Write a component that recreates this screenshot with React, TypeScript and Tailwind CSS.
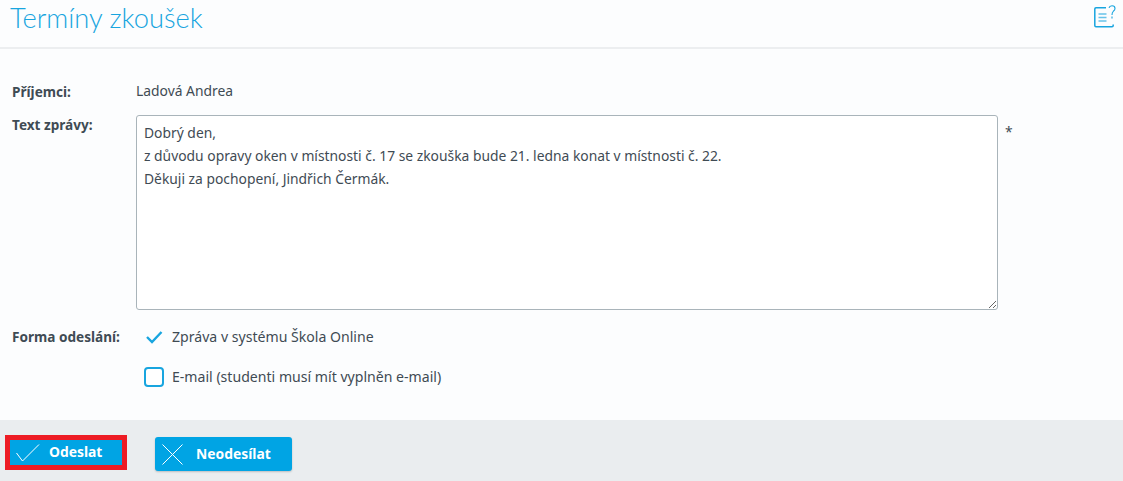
import { useState } from "react";

const CheckIcon = () => (
    <svg width="24" height="18" viewBox="0 0 24 18" fill="none" stroke="#fff" strokeWidth="1">
        <path d="M0.5 9 L6.5 17 L23 0.5" />
    </svg>
);

const CrossIcon = () => (
    <svg width="21" height="21" viewBox="0 0 21 21" fill="none" stroke="#fff" strokeWidth="1">
        <path d="M0.5 0.5 L20.5 20.5 M20.5 0.5 L0.5 20.5" />
    </svg>
);

const HelpIcon = () => (
    <svg width="22" height="23" viewBox="0 0 22 23" fill="none" stroke="#18a5df">
        <path d="M12 2.8 H2 Q0.8 2.8 0.8 4 V20.5 Q0.8 21.7 2 21.7 H18 Q19.2 21.7 19.2 20.5 V19.5" strokeWidth="1.5" />
        <path d="M4.5 9 H12.5 M4.5 12.5 H12.5 M4.5 16 H12.5" strokeWidth="1.5" opacity="0.65" />
        <path d="M15 2.8 Q15.5 0.7 18 0.7 Q21 0.7 21 3.4 Q21 5 19.3 6.3 Q18 7.4 18 10 M18 11.5 V13.5" strokeWidth="1.1" />
    </svg>
);

const App = () => {
    const [inSystem, setInSystem] = useState(true);
    const [byEmail, setByEmail] = useState(false);

    return (
        <div className="h-[481px] flex flex-col bg-[#fcfdfe] text-[#3f4b54] font-['Noto_Sans',sans-serif] text-[13.85px] overflow-hidden">
            {/* Header */}
            <div className="h-[49px] shrink-0 flex justify-between border-b-2 border-[#eceef0] pl-[10px] pr-[7px]">
                <h1 className="font-['Lato',sans-serif] font-light text-[27.3px] leading-[36px] text-[#18a5df]">Termíny zkoušek</h1>
                <div className="pt-[5px]"><HelpIcon /></div>
            </div>

            {/* Form */}
            <div className="flex-1 pt-[33px] pl-[12px]">
                <div className="flex h-[20px] items-center">
                    <div className="w-[124px] font-bold text-[13.6px]">Příjemci:</div>
                    <div className="-mt-[2px]">Ladová Andrea</div>
                </div>

                <div className="flex mt-[13px]">
                    <div className="w-[124px] font-bold text-[13.6px] leading-[20px]">Text zprávy:</div>
                    <textarea
                        className="w-[862px] h-[195px] border border-[#a9b4ba] rounded-[3px] bg-white px-[7px] py-[5px] leading-[23px] outline-none"
                        defaultValue={"Dobrý den,\nz důvodu opravy oken v místnosti č. 17 se zkouška bude 21. ledna konat v místnosti č. 22.\nDěkuji za pochopení, Jindřich Čermák."}
                    />
                    <span className="ml-[7px] pt-[7px] leading-[20px]">*</span>
                </div>

                <div className="flex mt-[17px]">
                    <div className="w-[132px] font-bold text-[13.6px] leading-[20px]">Forma odeslání:</div>
                    <div className="flex flex-col gap-[20px] text-[14.1px]">
                        <button type="button" onClick={() => setInSystem(!inSystem)} className="flex items-center gap-[8px] h-[20px]">
                            <span className="w-[20px] h-[20px] flex items-center justify-center">
                                {inSystem ? (
                                    <svg width="18" height="14" viewBox="0 0 18 14" fill="none" stroke="#18a5df" strokeWidth="2.4">
                                        <path d="M2 7 L7 12 L16.5 2" />
                                    </svg>
                                ) : null}
                            </span>
                            Zpráva v systému Škola Online
                        </button>
                        <button type="button" onClick={() => setByEmail(!byEmail)} className="flex items-center gap-[8px] h-[20px]">
                            <span className={`w-[20px] h-[20px] rounded-[4px] border-2 border-[#18a5df] ${byEmail ? "bg-[#18a5df]" : "bg-white"}`} />
                            E-mail (studenti musí mít vyplněn e-mail)
                        </button>
                    </div>
                </div>
            </div>

            {/* Footer */}
            <div className="h-[61px] shrink-0 bg-[#eaedef] flex items-start pl-[5px] pt-[15px]">
                <button type="button" className="w-[122px] h-[35px] flex items-center bg-[#00a4e4] border-[5px] border-[#ed1c24] text-white font-bold pl-[6px]">
                    <CheckIcon />
                    <span className="ml-[9px]">Odeslat</span>
                </button>
                <button type="button" className="ml-[28px] mt-[2px] w-[137px] h-[34px] flex items-center rounded-[3px] bg-[#00a4e4] shadow-[0_1px_2px_rgba(0,0,0,0.2)] text-white font-bold pl-[7px]">
                    <CrossIcon />
                    <span className="ml-[13px]">Neodesílat</span>
                </button>
            </div>
        </div>
    );
};

export default App;
